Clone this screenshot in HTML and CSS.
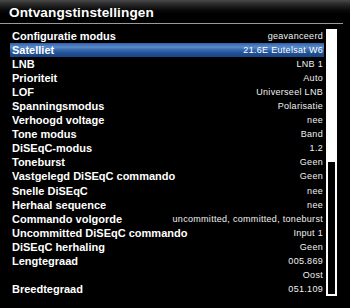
FILE: index.html
```html
<!DOCTYPE html>
<html>
<head>
<meta charset="utf-8">
<link rel="stylesheet" href="styles.css">
</head>
<body>
<div class="screen">
  <div class="titlebar"><span class="title">Ontvangstinstellingen</span></div>
  <div class="rule"></div>
  <div class="main">
    <ul class="list">
      <li class="row"><span class="label">Configuratie modus</span><span class="value">geavanceerd</span></li>
      <li class="row selected"><span class="label">Satelliet</span><span class="value">21.6E Eutelsat W6</span></li>
      <li class="row"><span class="label">LNB</span><span class="value">LNB 1</span></li>
      <li class="row"><span class="label">Prioriteit</span><span class="value">Auto</span></li>
      <li class="row"><span class="label">LOF</span><span class="value">Universeel LNB</span></li>
      <li class="row"><span class="label">Spanningsmodus</span><span class="value">Polarisatie</span></li>
      <li class="row"><span class="label">Verhoogd voltage</span><span class="value">nee</span></li>
      <li class="row"><span class="label">Tone modus</span><span class="value">Band</span></li>
      <li class="row"><span class="label">DiSEqC-modus</span><span class="value">1.2</span></li>
      <li class="row"><span class="label">Toneburst</span><span class="value">Geen</span></li>
      <li class="row"><span class="label">Vastgelegd DiSEqC commando</span><span class="value">Geen</span></li>
      <li class="row"><span class="label">Snelle DiSEqC</span><span class="value">nee</span></li>
      <li class="row"><span class="label">Herhaal sequence</span><span class="value">nee</span></li>
      <li class="row"><span class="label">Commando volgorde</span><span class="value">uncommitted, committed, toneburst</span></li>
      <li class="row"><span class="label">Uncommitted DiSEqC commando</span><span class="value">Input 1</span></li>
      <li class="row"><span class="label">DiSEqC herhaling</span><span class="value">Geen</span></li>
      <li class="row"><span class="label">Lengtegraad</span><span class="value">005.869</span></li>
      <li class="row"><span class="label"></span><span class="value">Oost</span></li>
      <li class="row"><span class="label">Breedtegraad</span><span class="value">051.109</span></li>
    </ul>
    <div class="scrollbar"><div class="thumb"></div></div>
  </div>
</div>
</body>
</html>
```
FILE: styles.css
```css
html, body {
  margin: 0;
  padding: 0;
  background: #000;
}
.screen {
  width: 350px;
  height: 308px;
  background: #000;
  color: #fff;
  font-family: "Liberation Sans", Arial, sans-serif;
  overflow: hidden;
}
.titlebar {
  height: 23px;
  background: linear-gradient(to bottom, #4a4a4a 0px, #2a2a2a 4px, #0a0a0a 10px, #000 14px);
  padding-left: 9px;
  box-sizing: border-box;
  display: flex;
  align-items: center;
}
.title {
  font-weight: bold;
  font-size: 13.6px;
  color: #fff;
  letter-spacing: 0.1px;
  padding-top: 1px;
}
.rule {
  height: 1px;
  width: 343px;
  background: #9a9a9a;
}
.main {
  display: flex;
  align-items: flex-start;
  padding-top: 5px;
}
.list {
  list-style: none;
  margin: 0 0 0 10px;
  padding: 0;
  width: 314px;
}
.row {
  height: 14.05px;
  display: flex;
  align-items: center;
  justify-content: space-between;
  white-space: nowrap;
}
.label {
  font-weight: bold;
  font-size: 11px;
  padding-left: 2px;
  color: #fff;
}
.value {
  font-size: 9px;
  letter-spacing: 0.3px;
  padding-right: 1px;
  color: #f0f0f0;
}
.row.selected {
  background: linear-gradient(to bottom, #2f62a8 0%, #5a8ccc 30%, #3a6db2 45%, #1f4f92 75%, #1a4584 100%);
}
.row.selected .value {
  color: #fff;
}
.scrollbar {
  margin-left: 2px;
  width: 11px;
  height: 267px;
  border: 2px solid #fff;
  box-sizing: border-box;
  background: #000;
}
.thumb {
  height: 131px;
  background: #fff;
}
```
